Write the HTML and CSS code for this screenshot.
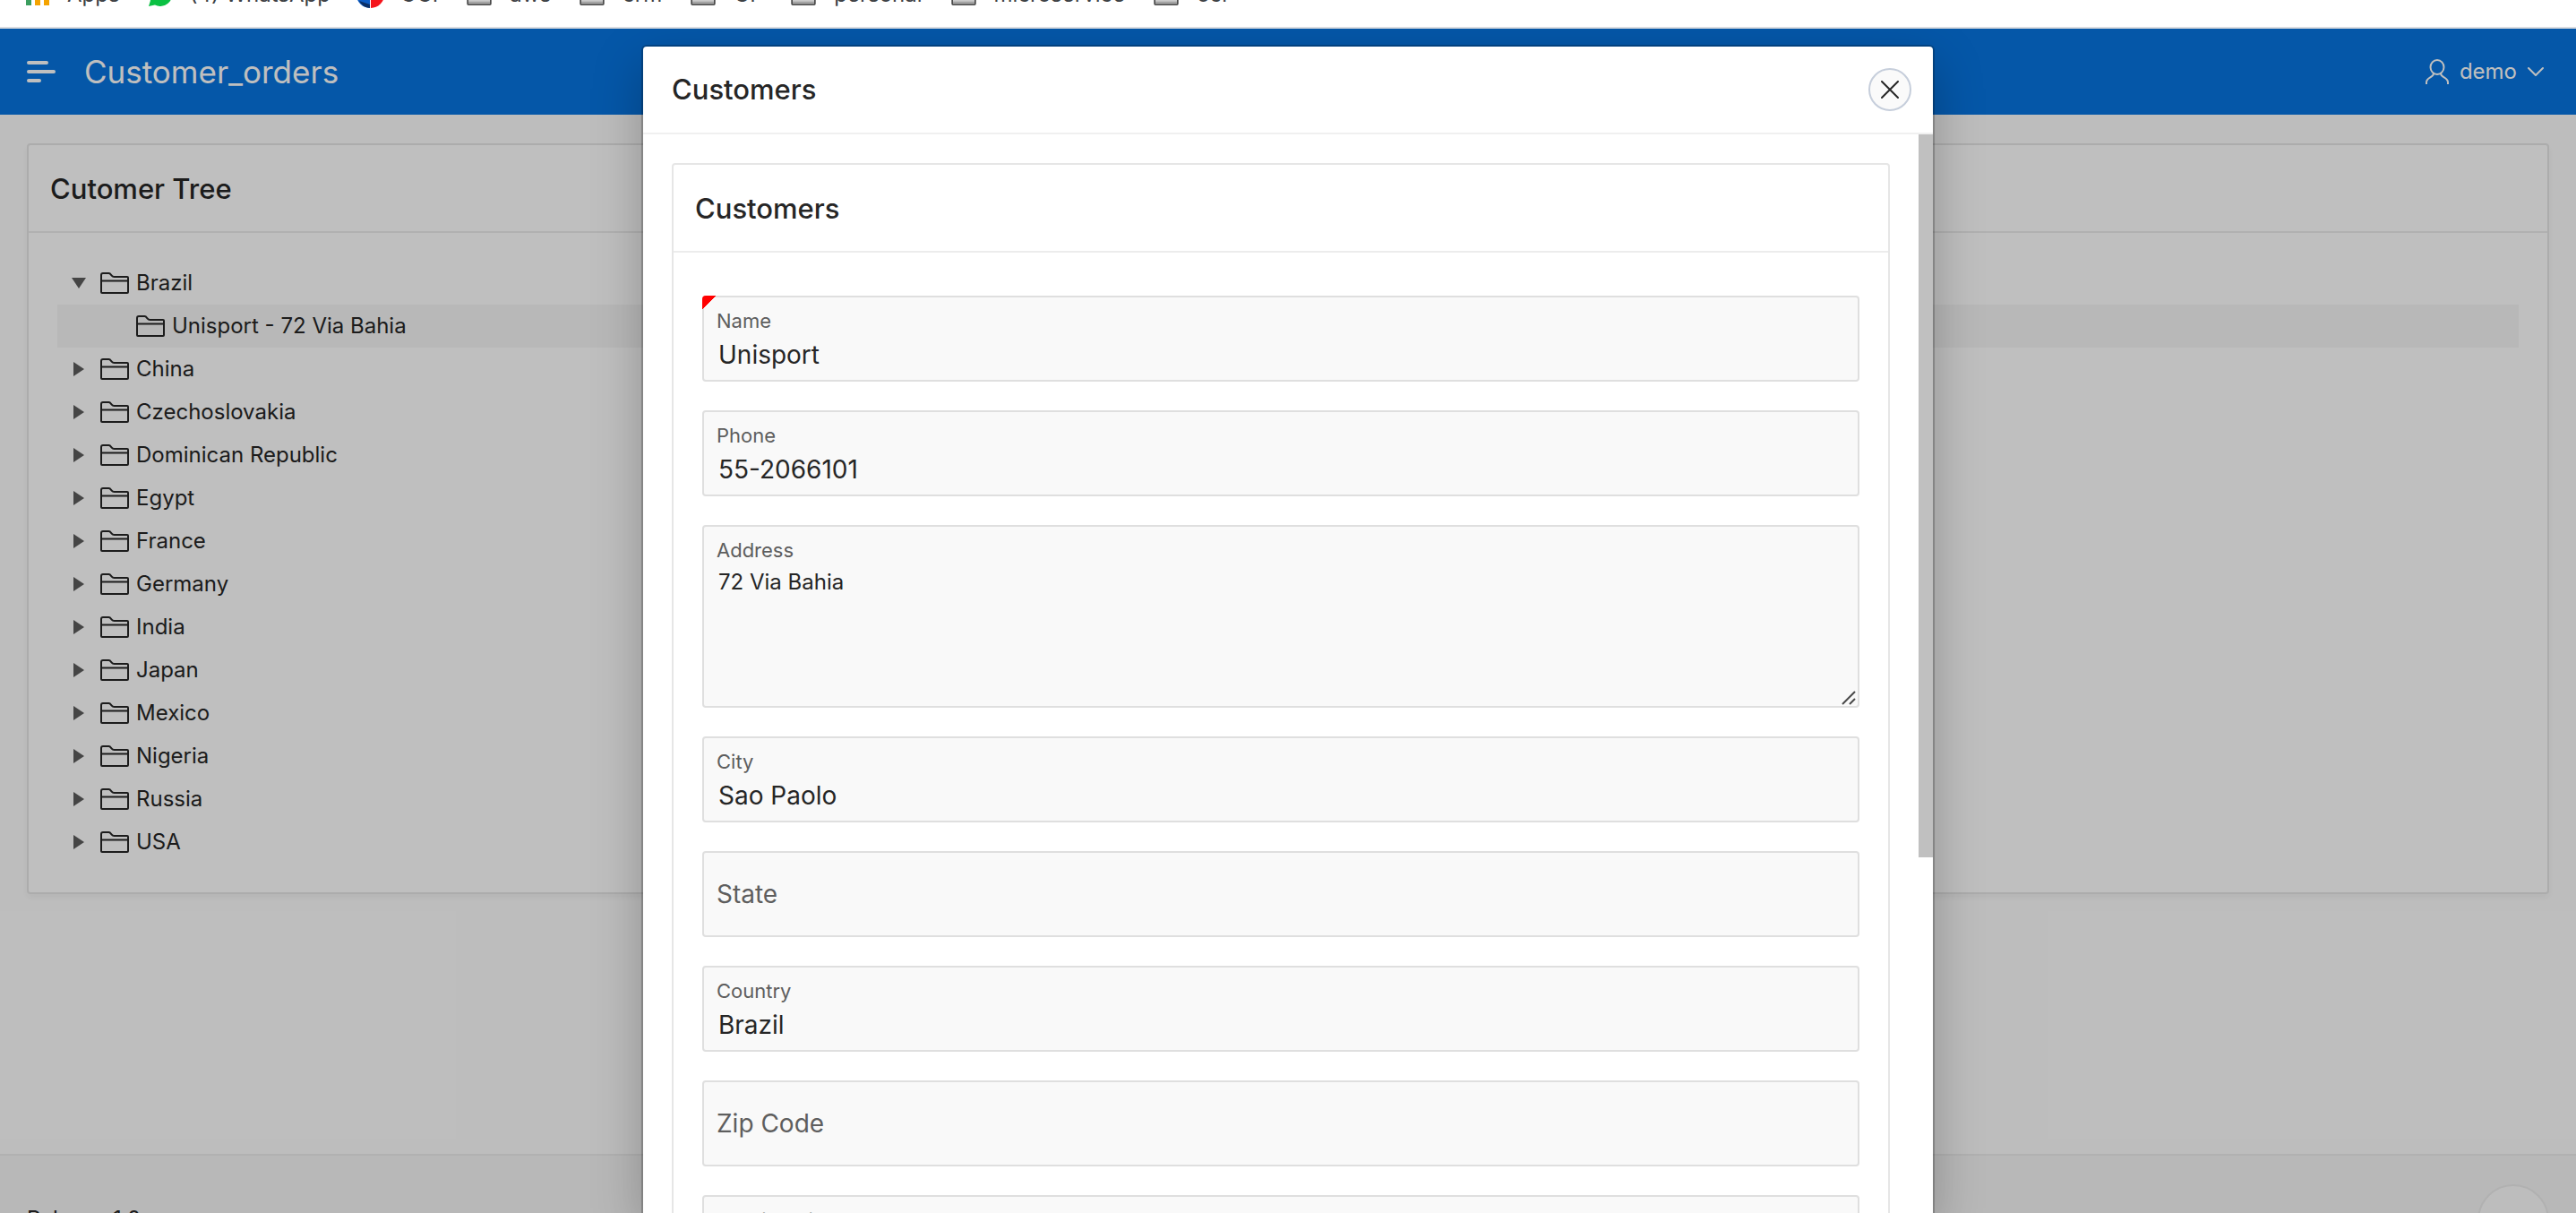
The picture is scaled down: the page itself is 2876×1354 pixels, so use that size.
FILE: index.html
```html
<!DOCTYPE html>
<html lang="en">
<head>
<meta charset="utf-8">
<title>Customer_orders</title>
<link rel="stylesheet" href="styles.css">
</head>
<body>
<svg class="defs" aria-hidden="true">
  <symbol id="folder" viewBox="0 0 32 24"><path d="M1 22V3a2 2 0 0 1 2-2h6.500c1.500 0 2.200 1.300 3.200 2.600S14.200 5 15.500 5H30a1 1 0 0 1 1 1v16a1 1 0 0 1-1 1H2a1 1 0 0 1-1-1zM1 9.500h30" fill="none" stroke="currentColor" stroke-width="2"/></symbol>
  <symbol id="open" viewBox="0 0 16 12"><path d="M0 0h16L8 12z" fill="currentColor"/></symbol>
  <symbol id="closed" viewBox="0 0 12 16"><path d="M0 0l12 8L0 16z" fill="currentColor"/></symbol>
  <symbol id="mark-folder" viewBox="0 0 32 28"><path d="M1 26V4a2 2 0 0 1 2-2h9l3 4h14a2 2 0 0 1 2 2v18a1 1 0 0 1-1 1H2a1 1 0 0 1-1-1z" fill="#cbcbcb" stroke="#4a4a4a" stroke-width="2"/><path d="M2 23h28v3H2z" fill="#a3a3a3"/></symbol>
</svg>
<nav class="bookmarks" aria-label="Bookmarks">
  <a href="#"><svg width="28" height="24" viewBox="0 2 28 24"><path d="M0 0h6v6H0zM10 0h6v6h-6zM20 0h6v6h-6z" fill="#dd4b39"/><path d="M0 10h6v6H0z" fill="#3b9e5f"/><path d="M0 20h6v6H0z" fill="#3b9e5f"/><path d="M10 10h6v6h-6zM20 10h6v6h-6zM10 20h6v6h-6zM20 20h6v6h-6z" fill="#f4a300"/></svg><span>Apps</span></a>
  <a href="#"><svg width="30" height="26" viewBox="0 0 30 26"><path d="M15 0a13 13 0 1 1-6 24.500L2 26l2-6.500A13 13 0 0 1 15 0z" fill="#0ac143"/><path d="M10 7c-2 3 3 11 9 12 3 0 3-4 1-5l-3 1-4-5 1-3z" fill="#fff"/></svg><span>(4) WhatsApp</span></a>
  <a href="#"><svg width="30" height="30" viewBox="0 0 30 30"><path d="M14 30A15 15 0 0 1 14 0z" fill="#0d5cc4"/><path d="M2 22a15 15 0 0 0 12 8v-4z" fill="#0b2f66"/><path d="M15 0a15 15 0 0 1 0 30z" fill="#f5141b"/></svg><span>OCI</span></a>
  <a href="#"><svg class="mark"><use href="#mark-folder"/></svg><span>aws</span></a>
  <a href="#"><svg class="mark"><use href="#mark-folder"/></svg><span>crm</span></a>
  <a href="#"><svg class="mark"><use href="#mark-folder"/></svg><span>GF</span></a>
  <a href="#"><svg class="mark"><use href="#mark-folder"/></svg><span>personal</span></a>
  <a href="#"><svg class="mark"><use href="#mark-folder"/></svg><span>microservice</span></a>
  <a href="#"><svg class="mark"><use href="#mark-folder"/></svg><span>oci</span></a>
</nav>
<div class="viewport">
  <div class="app">
    <header class="topbar">
      <button class="plain" type="button" aria-label="Menu"><svg width="32" height="24" viewBox="0 0 32 24"><path d="M2 2h20M2 12h28M2 22h12" stroke="currentColor" stroke-width="4" stroke-linecap="round"/></svg></button>
      <a class="brand" href="#">Customer_orders</a>
      <button class="plain user" type="button">
        <svg width="26" height="28" viewBox="0 0 26 28" fill="none" stroke="currentColor" stroke-width="2"><ellipse cx="13" cy="9" rx="7.500" ry="8"/><path d="M1 28v-2c0-6 8-5 8-10M25 28v-2c0-6-8-5-8-10"/></svg>
        demo
        <svg width="18" height="12" viewBox="0 0 18 12"><path d="M1 2l8 8 8-8" fill="none" stroke="currentColor" stroke-width="2" stroke-linecap="round" stroke-linejoin="round"/></svg>
      </button>
    </header>
    <main class="content">
      <section class="region tree-region">
        <h2>Cutomer Tree</h2>
        <ul class="tree">
          <li><svg class="arrow"><use href="#open"/></svg><svg class="folder"><use href="#folder"/></svg>Brazil</li>
          <li class="child selected"><svg class="folder"><use href="#folder"/></svg>Unisport - 72 Via Bahia</li>
          <li><svg class="arrow"><use href="#closed"/></svg><svg class="folder"><use href="#folder"/></svg>China</li>
          <li><svg class="arrow"><use href="#closed"/></svg><svg class="folder"><use href="#folder"/></svg>Czechoslovakia</li>
          <li><svg class="arrow"><use href="#closed"/></svg><svg class="folder"><use href="#folder"/></svg>Dominican Republic</li>
          <li><svg class="arrow"><use href="#closed"/></svg><svg class="folder"><use href="#folder"/></svg>Egypt</li>
          <li><svg class="arrow"><use href="#closed"/></svg><svg class="folder"><use href="#folder"/></svg>France</li>
          <li><svg class="arrow"><use href="#closed"/></svg><svg class="folder"><use href="#folder"/></svg>Germany</li>
          <li><svg class="arrow"><use href="#closed"/></svg><svg class="folder"><use href="#folder"/></svg>India</li>
          <li><svg class="arrow"><use href="#closed"/></svg><svg class="folder"><use href="#folder"/></svg>Japan</li>
          <li><svg class="arrow"><use href="#closed"/></svg><svg class="folder"><use href="#folder"/></svg>Mexico</li>
          <li><svg class="arrow"><use href="#closed"/></svg><svg class="folder"><use href="#folder"/></svg>Nigeria</li>
          <li><svg class="arrow"><use href="#closed"/></svg><svg class="folder"><use href="#folder"/></svg>Russia</li>
          <li><svg class="arrow"><use href="#closed"/></svg><svg class="folder"><use href="#folder"/></svg>USA</li>
        </ul>
      </section>
    </main>
    <footer class="footer">
      <span>Release 1.0</span>
      <button class="to-top" type="button" aria-label="Back to top"></button>
    </footer>
  </div>
  <div class="backdrop">
    <div class="dialog" role="dialog" aria-labelledby="dialog-title">
      <div class="dialog-head">
        <h1 id="dialog-title">Customers</h1>
        <button class="close" type="button" aria-label="Close"><svg width="20" height="20" viewBox="0 0 20 20"><path d="M1 1l18 18M19 1L1 19" stroke="currentColor" stroke-width="2" stroke-linecap="round"/></svg></button>
      </div>
      <div class="dialog-body">
        <div class="scroller">
          <section class="region">
            <h2>Customers</h2>
            <form class="form">
              <div class="field required"><input id="name" type="text" value="Unisport" required><label for="name">Name</label></div>
              <div class="field"><input id="phone" type="text" value="55-2066101"><label for="phone">Phone</label></div>
              <div class="field"><textarea id="address">72 Via Bahia</textarea><label for="address">Address</label><svg class="grip" width="16" height="16" viewBox="0 0 16 16"><path d="M1 15L15 1M9 15l6-6" stroke="currentColor" stroke-width="2"/></svg></div>
              <div class="field"><input id="city" type="text" value="Sao Paolo"><label for="city">City</label></div>
              <div class="field empty"><input id="state" type="text"><label for="state">State</label></div>
              <div class="field"><input id="country" type="text" value="Brazil"><label for="country">Country</label></div>
              <div class="field empty"><input id="zip" type="text"><label for="zip">Zip Code</label></div>
              <div class="field"><input id="credit" type="text"><label for="credit">Credit Rating</label></div>
            </form>
          </section>
        </div>
        <div class="track"><div class="thumb"></div></div>
      </div>
    </div>
  </div>
</div>
</body>
</html>
```
FILE: styles.css
```css
* { box-sizing: border-box; }
body {
  margin: 0;
  height: 100vh;
  display: flex;
  flex-direction: column;
  overflow: hidden;
  font: 24px/32px Inter, "Liberation Sans", sans-serif;
  color: #262626;
  background: #fff;
}
svg { display: block; flex: none; }
.defs { display: none; }
button, input, textarea { font: inherit; color: inherit; margin: 0; }
h1, h2 { margin: 0; font-size: 31px; font-weight: 500; line-height: 40px; }

/* Browser bookmarks strip, scrolled partly out of view */
.bookmarks {
  flex: none;
  height: 32px;
  padding: 0 29px 16px;
  display: flex;
  align-items: flex-end;
  gap: 30px;
  overflow: hidden;
  border-bottom: 2px solid #dadce0;
}
.bookmarks a {
  flex: none;
  height: 40px;
  display: flex;
  align-items: center;
  gap: 18px;
  color: #3c4043;
  text-decoration: none;
}
.bookmarks .mark { width: 32px; height: 24px; }

.viewport { flex: 1; min-height: 0; position: relative; overflow: hidden; }
.app { height: 100%; display: flex; flex-direction: column; background: #fdfdfd; }

.topbar {
  flex: none;
  height: 96px;
  padding: 0 36px 0 30px;
  display: flex;
  align-items: center;
  background: #0775e0;
  color: #fff;
}
.plain {
  padding: 0;
  border: 0;
  background: none;
  display: flex;
  align-items: center;
  gap: 12px;
}
.brand { margin-left: 32px; font-size: 35px; line-height: 48px; color: inherit; text-decoration: none; }
.user { margin-left: auto; }

.content { flex: 1; min-height: 0; padding: 32px 30px; }
.region { border: 2px solid #e6e6e6; border-radius: 4px; background: #fff; }
.region h2 { height: 98px; padding: 29px 24px 27px; border-bottom: 2px solid #ececec; }
.tree-region { box-shadow: 0 4px 8px rgba(0, 0, 0, .05); }
.tree { margin: 0; padding: 32px; list-style: none; }
.tree li { height: 48px; padding-left: 16px; display: flex; align-items: center; }
.tree .child { padding-left: 88px; }
.tree .selected { background: #f6f6f6; }
.arrow { width: 16px; height: 16px; margin-right: 16px; color: #5c5c5c; }
.folder { width: 32px; height: 24px; margin-right: 8px; }

.footer {
  flex: none;
  height: 66px;
  padding: 32px 30px 0;
  display: flex;
  justify-content: space-between;
  align-items: flex-start;
  line-height: 78px;
  background: #f6f6f6;
  border-top: 2px solid #ececec;
}
.to-top { width: 80px; height: 80px; border: 2px solid #ececec; border-radius: 50%; background: #fdfdfd; }

.backdrop {
  position: absolute;
  inset: 0;
  padding-top: 20px;
  display: flex;
  justify-content: center;
  background: rgba(0, 0, 0, .25);
}
.dialog {
  width: 1440px;
  max-width: 100%;
  display: flex;
  flex-direction: column;
  border-radius: 4px 4px 0 0;
  background: #fff;
  box-shadow: 0 0 0 2px rgba(0, 0, 0, .2), 0 20px 56px rgba(0, 0, 0, .26);
}
.dialog-head {
  flex: none;
  height: 98px;
  padding: 0 24px 0 32px;
  display: flex;
  align-items: center;
  justify-content: space-between;
  border-bottom: 2px solid #f0f0f0;
}
.close {
  width: 48px;
  height: 48px;
  padding: 0;
  display: grid;
  place-items: center;
  border: 2px solid #c6cedb;
  border-radius: 50%;
  background: #fafafa;
}
.dialog-body { flex: 1; min-height: 0; display: flex; }
.scroller { flex: 1; padding: 32px; overflow: hidden; }
.track { flex: none; width: 16px; }
.thumb { height: 67%; background: #c0c0c0; }

.form { padding: 48px 32px; display: flex; flex-direction: column; gap: 32px; }
.field { display: grid; position: relative; }
.field > * { grid-area: 1 / 1; }
.field label {
  place-self: start;
  padding: 12px 16px;
  font-size: 22px;
  color: #5e5e5e;
  pointer-events: none;
}
.field.empty label { align-self: center; font-size: 28px; }
.field input, .field textarea {
  width: 100%;
  height: 96px;
  padding: 46px 16px 10px;
  font-size: 28px;
  line-height: 36px;
  border: 2px solid #dfdfdf;
  border-radius: 4px;
  background: #f9f9f9;
  outline: 0;
}
.field textarea { height: 204px; font-size: 24px; line-height: 32px; resize: none; display: block; }
.grip { place-self: end; margin: 0 4px 3px; color: #4a4a4a; }
.required::before {
  content: "";
  position: absolute;
  top: 0;
  left: 0;
  width: 16px;
  height: 16px;
  border-top-left-radius: 4px;
  background: linear-gradient(135deg, #f00 50%, transparent 50%);
}
```
